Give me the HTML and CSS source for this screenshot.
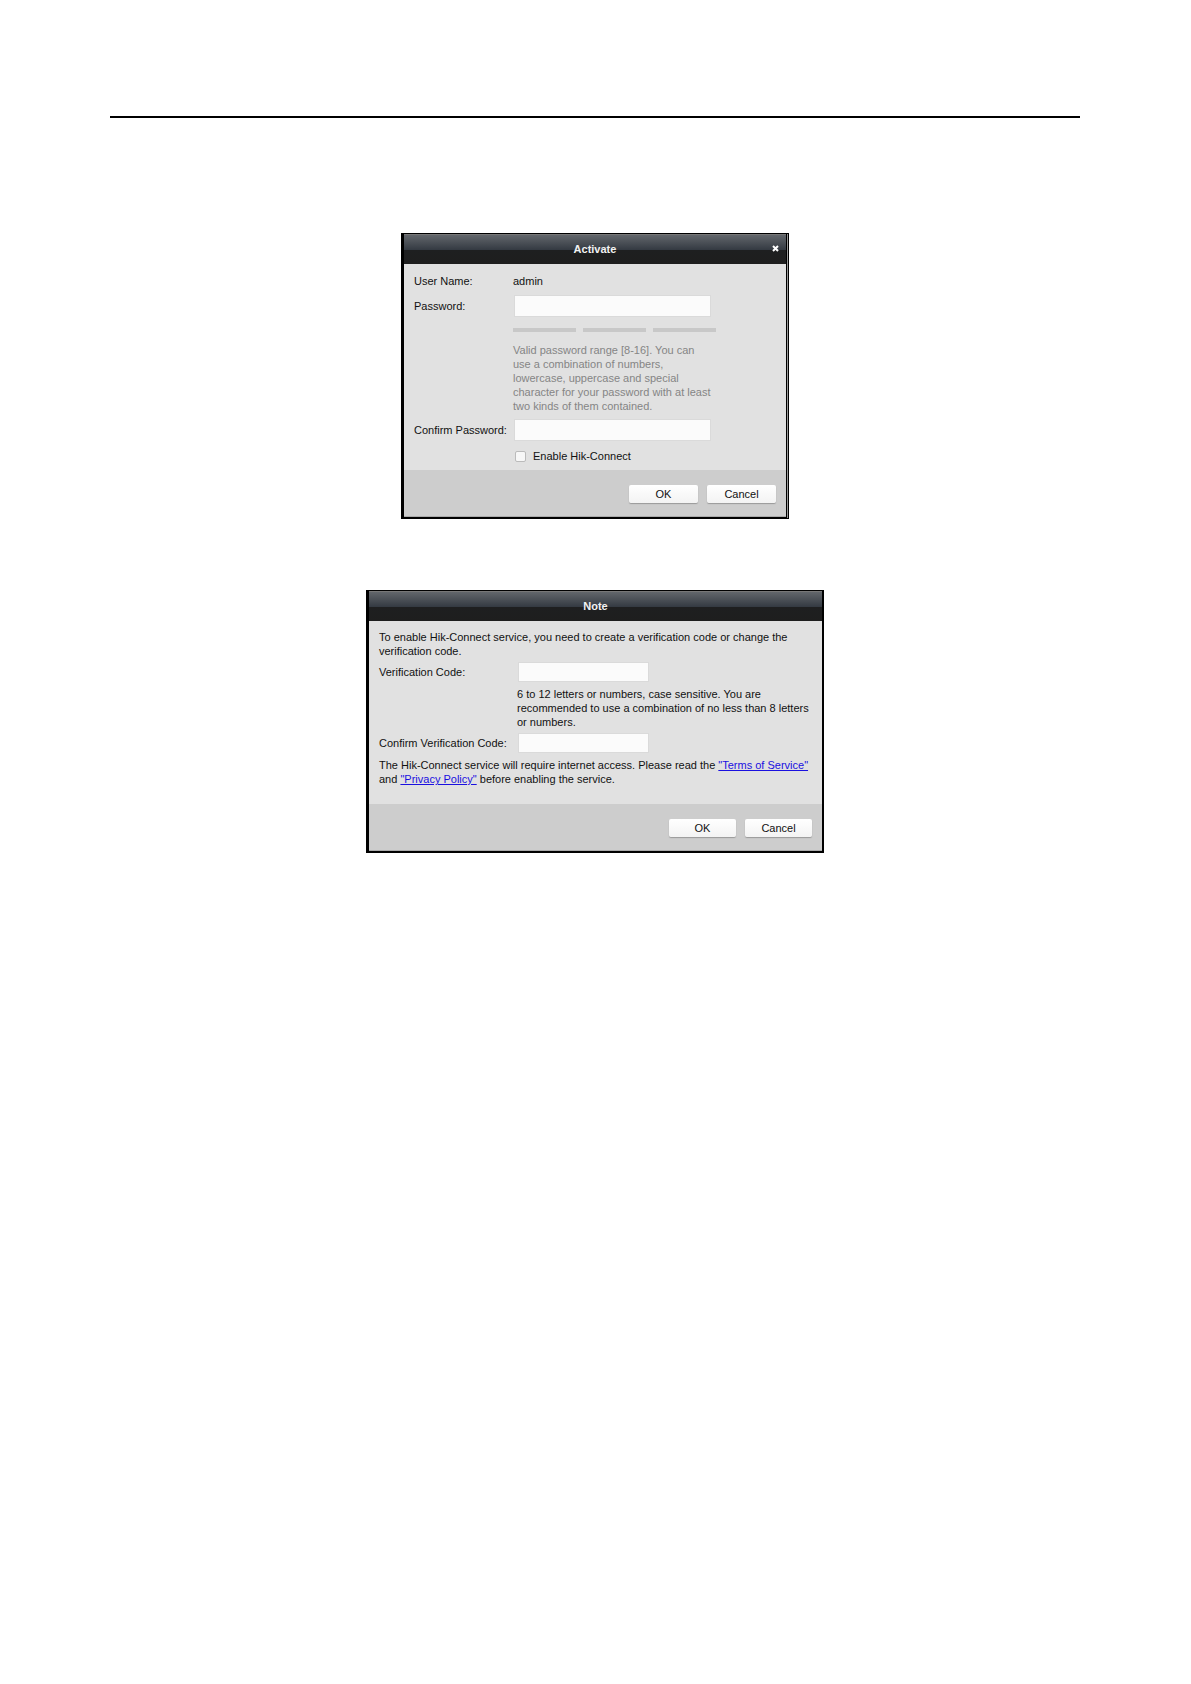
FILE: index.html
```html
<!DOCTYPE html>
<html lang="en">
<head>
  <meta charset="UTF-8">
  <meta name="viewport" content="width=device-width, initial-scale=1">
  <title>Activate</title>
  <link rel="stylesheet" href="styles.css">
</head>
<body>

  <header class="page-header"></header>

  <main class="page">
    <!-- Activate dialog -->
    <form class="dialog activate">
      <div class="titlebar">
        <h2>Activate</h2>
        <button type="button" class="close" aria-label="Close">
          <svg width="7" height="7" viewBox="0 0 7 7"><path d="M1 1L6 6M6 1L1 6" stroke="#fff" stroke-width="2"/></svg>
        </button>
      </div>
      <div class="content">
        <div class="row">
          <span class="label">User Name:</span>
          <span>admin</span>
        </div>
        <div class="row password">
          <label class="label" for="password">Password:</label>
          <input type="password" id="password">
        </div>
        <div class="strength"><span></span><span></span><span></span></div>
        <p class="hint">Valid password range [8-16]. You can<br>use a combination of numbers,<br>lowercase, uppercase and special<br>character for your password with at least<br>two kinds of them contained.</p>
        <div class="row">
          <label class="label" for="confirm">Confirm Password:</label>
          <input type="password" id="confirm">
        </div>
        <div class="check">
          <input type="checkbox" id="hik">
          <label for="hik">Enable Hik-Connect</label>
        </div>
      </div>
      <div class="actions">
        <button type="button">OK</button>
        <button type="button">Cancel</button>
      </div>
    </form>

    <!-- Verification code dialog -->
    <form class="dialog note">
      <div class="titlebar">
        <h2>Note</h2>
      </div>
      <div class="content">
        <p>To enable Hik-Connect service, you need to create a verification code or change the<br>verification code.</p>
        <div class="row code">
          <label class="label" for="code">Verification Code:</label>
          <input type="password" id="code">
        </div>
        <p class="hint">6 to 12 letters or numbers, case sensitive. You are<br>recommended to use a combination of no less than 8 letters<br>or numbers.</p>
        <div class="row">
          <label class="label" for="confirm-code">Confirm Verification Code:</label>
          <input type="password" id="confirm-code">
        </div>
        <p class="terms">The Hik-Connect service will require internet access. Please read the <a href="#">"Terms of Service"</a><br>and <a href="#">"Privacy Policy"</a> before enabling the service.</p>
      </div>
      <div class="actions">
        <button type="button">OK</button>
        <button type="button">Cancel</button>
      </div>
    </form>
  </main>

</body>
</html>
```

FILE: styles.css
```css
* {
  box-sizing: border-box;
}

body {
  margin: 0;
  padding: 0 111px 0 110px;
  background: #fff;
  color: #111;
  font-family: "Liberation Sans", Arial, sans-serif;
  font-size: 11px;
  line-height: 14px;
}

h2,
p {
  margin: 0;
}

.page-header {
  height: 118px;
  border-bottom: 2px solid #000;
}

.page {
  display: flex;
  flex-direction: column;
  align-items: center;
  gap: 71px;
  padding: 115px 0;
}

.dialog {
  max-width: 100%;
  border: solid #000;
  border-width: 1px 2px 2px 3px;
  background: #999;
}

.activate {
  width: 388px;
  border-right: 3px double #000;
}

.note {
  width: 458px;
}

/* Title bar */
.titlebar {
  position: relative;
  display: flex;
  align-items: center;
  justify-content: center;
  height: 30px;
  padding-bottom: 2px;
  border-top: 1px solid #777;
  background: linear-gradient(#62666b, #353b43 50%, #1e1f20 51%, #1e1e1e);
}

.titlebar h2 {
  color: #f2f2f2;
  font-size: 11px;
}

.close {
  position: absolute;
  right: 7px;
  display: flex;
  padding: 0;
  border: 0;
  background: none;
}

/* Form content */
.content {
  display: flex;
  flex-direction: column;
  background: #e1e1e1;
}

.row {
  display: flex;
  align-items: center;
}

.row input {
  padding: 0 4px;
  border: 0;
  background: #fbfbfb;
  box-shadow: 0 0 0 1px #dadada;
  font: inherit;
}

.label {
  flex: none;
  white-space: nowrap;
}

.activate .content {
  padding: 10px 10px 7px;
}

.activate .label {
  width: 99px;
}

.activate .row input {
  width: 195px;
  height: 20px;
  margin-left: 2px;
}

.password {
  margin-top: 8px;
}

.strength {
  display: flex;
  gap: 7px;
  margin: 12px 0 11px 99px;
}

.strength span {
  width: 63px;
  height: 4px;
  background: #c8c8c8;
}

.activate .hint {
  margin: 0 0 7px 99px;
  color: #858585;
}

.check {
  display: flex;
  align-items: center;
  gap: 7px;
  margin: 9px 0 0 101px;
}

.check input {
  width: 11px;
  height: 11px;
  margin: 0;
  border: 1px solid #bbb;
  border-radius: 2px;
  background: #f7f7f7;
  appearance: none;
}

.check input:checked {
  background: #555;
}

.note .content {
  padding: 9px 10px 18px;
}

.note .label {
  width: 138px;
}

.note .row input {
  width: 129px;
  height: 18px;
  margin-left: 2px;
}

.code {
  margin-top: 5px;
}

.note .hint {
  margin: 6px 0 5px 138px;
}

.terms {
  margin-top: 6px;
}

a {
  color: #1a10e0;
}

/* Buttons */
.actions {
  display: flex;
  justify-content: flex-end;
  gap: 9px;
  padding: 15px 10px 13px;
  border-bottom: 1px solid #aaa;
  background: #cdcdcd;
}

.actions button {
  width: 69px;
  height: 18px;
  padding: 0;
  border: 0;
  border-radius: 2px;
  background: linear-gradient(#fff, #f3f3f3);
  box-shadow: 0 1px 1px #999;
  color: #111;
  font: inherit;
}

.note .actions button {
  width: 67px;
}
```
